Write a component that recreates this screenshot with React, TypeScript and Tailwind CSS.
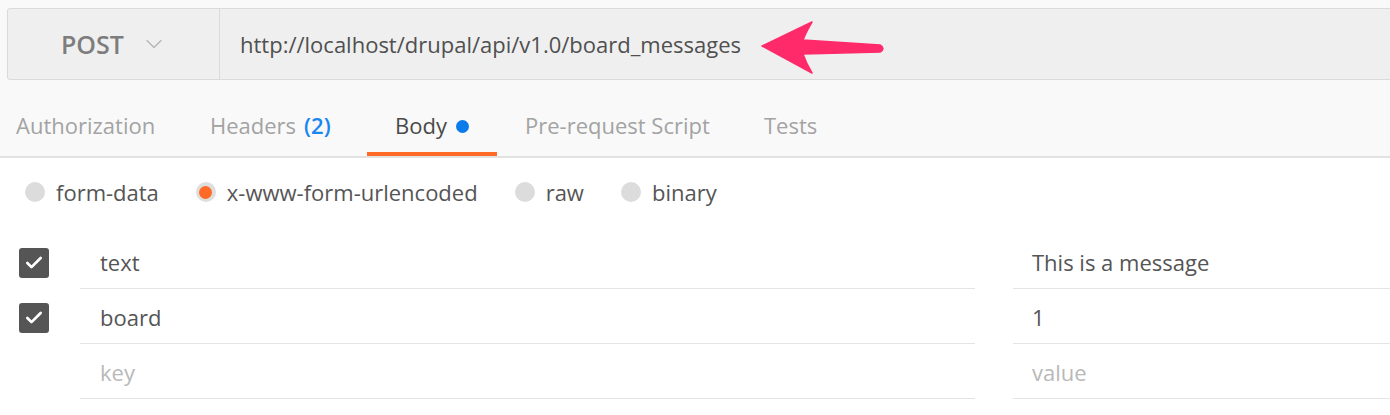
import { ChevronDown, Check } from 'lucide-react'

const font = { fontFamily: '"Open Sans", "Liberation Sans", sans-serif' }

const tabs = [
  { label: 'Authorization', box: 'w-[182px] pl-[16px]' },
  { label: 'Headers', box: 'w-[185px] pl-[28px]', count: '(2)' },
  { label: 'Body', box: 'w-[130px] pl-[28px]', active: true },
  { label: 'Pre-request Script', box: 'w-[239px] pl-[28px]' },
  { label: 'Tests', box: 'w-[120px] pl-[28px]' },
]

const modes = [
  { label: 'form-data' },
  { label: 'x-www-form-urlencoded', selected: true },
  { label: 'raw' },
  { label: 'binary' },
]

const rows = [
  { key: 'text', value: 'This is a message', checked: true },
  { key: 'board', value: '1', checked: true },
  { key: 'key', value: 'value', placeholder: true },
]

function Arrow() {
  return (
    <svg
      className="absolute left-[755px] top-[16px]"
      width="140"
      height="64"
      viewBox="755 16 140 64"
    >
      <path
        d="M762 46 L812 22 Q806 32 803 40 L880 45 Q886 48.5 880 52 L803 54 Q806 63 812 73 Z"
        fill="#ff2a6a"
        stroke="#ff2a6a"
        strokeWidth="1.5"
        strokeLinejoin="round"
      />
    </svg>
  )
}

export default function App() {
  return (
    <div className="min-h-[415px] w-[1390px] overflow-hidden bg-white" style={font}>
      <div className="relative bg-[#f9f9f9] pt-[8px]">
        <div className="ml-[7px] flex h-[72px] w-[1400px] items-center rounded-l-[3px] border border-[#dadada] bg-[#efefef]">
          <div className="flex h-full w-[212px] items-center border-r border-[#dadada] pl-[53px]">
            <span className="text-[25px] font-semibold leading-none text-[#7d7d7d]">POST</span>
            <ChevronDown className="ml-[16px] h-[28px] w-[28px] text-[#b5b5b5]" strokeWidth={1.1} />
          </div>
          <span className="pl-[20px] text-[22px] text-[#505050]">
            http://localhost/drupal/api/v1.0/board_messages
          </span>
        </div>
        <Arrow />
        <div className="flex h-[78px] items-end border-b-2 border-[#e2e2e2]">
          {tabs.map((tab) => (
            <div key={tab.label} className={`relative flex h-full items-center pt-[14px] ${tab.box}`}>
              <span className={`text-[22px] ${tab.active ? 'text-[#4a4a4a]' : 'text-[#a3a3a3]'}`}>
                {tab.label}
              </span>
              {tab.count && <span className="ml-[8px] text-[22px] font-semibold text-[#1a86ef]">{tab.count}</span>}
              {tab.active && <span className="ml-[9px] mt-[2px] h-[13px] w-[13px] rounded-full bg-[#0a7bea]" />}
              {tab.active && <span className="absolute bottom-0 left-0 h-[4px] w-full bg-[#ff6b27]" />}
            </div>
          ))}
        </div>
      </div>

      <div className="flex h-[70px] items-center gap-[37px] pb-[2px] pl-[25px]">
        {modes.map((m) => (
          <div key={m.label} className="flex items-center gap-[11px]">
            {m.selected ? (
              <span className="flex h-[20px] w-[20px] items-center justify-center rounded-full bg-[#dedede]">
                <span className="h-[13px] w-[13px] rounded-full bg-[#ff6b27]" />
              </span>
            ) : (
              <span className="h-[20px] w-[20px] rounded-full bg-[#dcdcdc]" />
            )}
            <span className="text-[22px] text-[#555555]">{m.label}</span>
          </div>
        ))}
      </div>

      <div className="pt-[6px]">
        {rows.map((r) => (
          <div key={r.key} className="flex h-[55px] items-stretch">
            <div className="flex w-[80px] items-center pl-[19px] pt-[2px]">
              {r.checked && (
                <span className="flex h-[30px] w-[30px] items-center justify-center rounded-[3px] bg-[#555555]">
                  <Check className="h-[20px] w-[20px] text-white" strokeWidth={3.2} />
                </span>
              )}
            </div>
            <div
              className={`flex w-[895px] items-center border-b border-[#e4e4e4] pl-[20px] pt-[3px] text-[22px] ${r.placeholder ? 'text-[#b9b9b9]' : 'text-[#555555]'}`}
            >
              {r.key}
            </div>
            <div
              className={`ml-[38px] flex flex-1 items-center border-b border-[#e4e4e4] pl-[19px] pt-[3px] text-[22px] ${r.placeholder ? 'text-[#b9b9b9]' : 'text-[#555555]'}`}
            >
              {r.value}
            </div>
          </div>
        ))}
      </div>
    </div>
  )
}
